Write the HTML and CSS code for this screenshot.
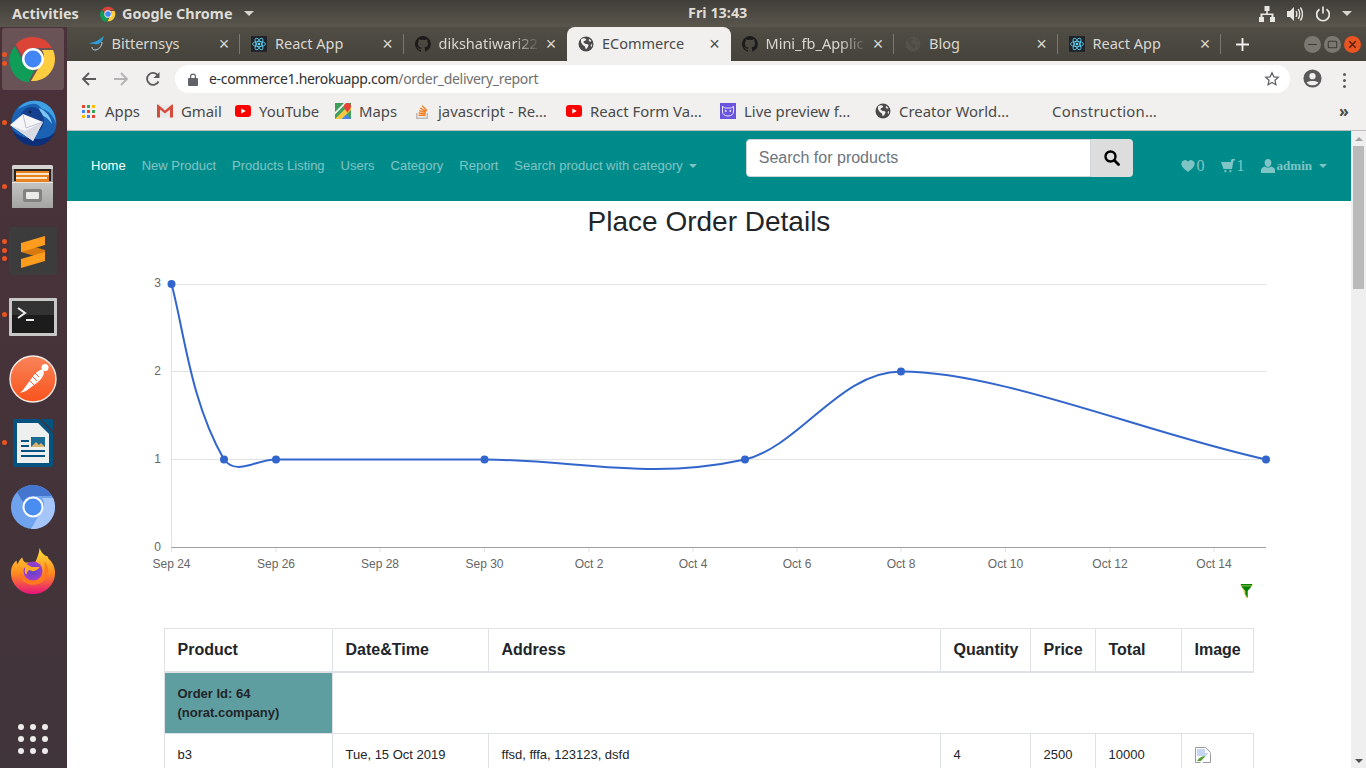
FILE: index.html
```html
<!DOCTYPE html>
<html lang="en">
<head>
<meta charset="utf-8">
<title>ECommerce</title>
<link rel="stylesheet" href="styles.css">
</head>
<body>
<svg class="defs" width="0" height="0" aria-hidden="true">
  <symbol id="i-chrome" viewBox="0 0 48 48">
    <path fill="#db4437" d="M24 2a22 22 0 0 1 19 11H24a11 11 0 0 0-10.500 7.500L6.500 9.500A22 22 0 0 1 24 2z"/>
    <path fill="#0f9d58" d="M5.800 11.500 15 27.500a11 11 0 0 0 10.500 7.400l-6.300 12.600A22 22 0 0 1 5.800 11.500z"/>
    <path fill="#ffcd40" d="M44 15a22 22 0 0 1-22 31l9.500-16.500A11 11 0 0 0 33 15z"/>
    <circle cx="24" cy="24" r="11" fill="#fff"/><circle cx="24" cy="24" r="8.500" fill="#4285f4"/>
  </symbol>
  <symbol id="i-chromium" viewBox="0 0 48 48">
    <circle cx="24" cy="24" r="22" fill="#6fa3ee"/>
    <path fill="#4476d0" d="M8 9a22 22 0 0 1 35 4H24a11 11 0 0 0-10 6z"/>
    <path fill="#a6c5f8" d="M44 15a22 22 0 0 1-22 31l9-16a11 11 0 0 0 2-15z"/>
    <circle cx="24" cy="24" r="9.500" fill="#4a8df0" stroke="#fff" stroke-width="2"/>
  </symbol>
  <symbol id="i-react" viewBox="0 0 16 16">
    <rect width="16" height="16" rx="1" fill="#20232a"/>
    <g fill="none" stroke="#61dafb" stroke-width=".8">
      <ellipse cx="8" cy="8" rx="6.500" ry="2.600"/>
      <ellipse cx="8" cy="8" rx="6.500" ry="2.600" transform="rotate(60 8 8)"/>
      <ellipse cx="8" cy="8" rx="6.500" ry="2.600" transform="rotate(120 8 8)"/>
    </g>
    <circle cx="8" cy="8" r="1.300" fill="#61dafb"/>
  </symbol>
  <symbol id="i-github" viewBox="0 0 16 16">
    <path fill="#1b1b1b" d="M8 0a8 8 0 0 0-2.500 15.600c.4.100.5-.2.500-.4v-1.400c-2.200.5-2.700-1-2.700-1-.4-.9-.9-1.200-.9-1.200-.7-.5.100-.5.100-.5.800.1 1.200.8 1.200.8.700 1.200 1.900.9 2.300.7.100-.5.300-.9.500-1.100-1.800-.2-3.600-.9-3.600-4 0-.9.300-1.600.8-2.100-.1-.2-.4-1 .1-2.100 0 0 .7-.2 2.200.8a7.600 7.600 0 0 1 4 0c1.500-1 2.200-.8 2.200-.8.400 1.100.2 1.900.1 2.100.5.600.8 1.300.8 2.100 0 3.100-1.900 3.700-3.700 3.900.3.300.6.700.6 1.500v2.200c0 .2.100.5.600.4A8 8 0 0 0 8 0z"/>
  </symbol>
  <symbol id="i-globe" viewBox="0 0 16 16">
    <circle cx="8" cy="8" r="7.500" fill="currentColor"/>
    <path class="land" d="M3 3.500c1-.8 2.500-1.300 3.500-1.200l1.800 1-1 1.500-1.500.4-.3 1.400 2.200 1.300 2.300.3.500 1.400-1.500 2.800-1.400.6-.6-2.600-2.200-1.500-1.800-2.700zM11 2.800l2.500 2.300-1.300.6-1.500-1zM13 8.500l1.200-.5-.6 3-1-1z"/>
  </symbol>
  <symbol id="i-youtube" viewBox="0 0 16 12">
    <rect width="16" height="12" rx="3.200" fill="#f00"/><path fill="#fff" d="M6.300 3.400 10.800 6l-4.500 2.600z"/>
  </symbol>
  <symbol id="i-heart" viewBox="0 0 14 13">
    <path fill="currentColor" d="M7 12.500C4 10 .3 7.500.3 4A3.600 3.600 0 0 1 7 2.300 3.600 3.600 0 0 1 13.700 4c0 3.500-3.700 6-6.700 8.500z"/>
  </symbol>
  <symbol id="i-cart" viewBox="0 0 14 14">
    <path fill="currentColor" d="M14 0v1.500h-1.500L11 10H2.500L0 3h9.800l.4-2L11 0zM3.500 11h1.800v2.300H3.500zM8.500 11h1.800v2.300H8.500z"/>
  </symbol>
  <symbol id="i-user" viewBox="0 0 14 14">
    <path fill="currentColor" d="M7 0c2.200 0 3.400 1.600 3.400 3.500S9.200 8 7 8 3.600 5.400 3.600 3.500 4.800 0 7 0zM4 7.500C5 9 9 9 10 7.500c2 .5 4 1.400 4 3.500v3H0v-3c0-2.100 2-3 4-3.500z"/>
  </symbol>
</svg>

<header class="topbar">
  <span class="activities">Activities</span>
  <span class="appmenu">
    <svg class="appicon"><use href="#i-chrome"/></svg>
    <span>Google Chrome</span><i class="tri"></i>
  </span>
  <span class="clock">Fri 13:43</span>
  <span class="tray">
    <svg class="tray-net" viewBox="0 0 16 16"><path fill="#e8e6e1" d="M5.500 0h5v5H8.800v2.500h5.700V11H16v5h-5v-5h1.500V9h-9v2H5v5H0v-5h1.500V7.500h5.700V5H5.500z"/></svg>
    <svg class="tray-vol" viewBox="0 0 16 16"><path fill="#e8e6e1" d="M0 5h3l4-4v14l-4-4H0z"/><path fill="none" stroke="#e8e6e1" stroke-width="1.400" d="M9 5c1 1.800 1 4.200 0 6M11.200 3.200c1.900 3 1.900 6.600 0 9.600M13.400 1.500c2.600 4 2.600 9 0 13"/></svg>
    <svg class="tray-pow" viewBox="0 0 16 16"><path fill="none" stroke="#e8e6e1" stroke-width="1.700" d="M4.500 3.200a6.300 6.300 0 1 0 7 0M8 .5v7"/></svg>
    <i class="tri"></i>
  </span>
</header>

<div class="desktop">
  <nav class="dock">
    <div class="dock-item active"><i class="dot d1"></i><i class="dot d2"></i><svg class="dock-icon"><use href="#i-chrome"/></svg></div>
    <div class="dock-item"><i class="dot"></i>
      <svg class="dock-icon" viewBox="0 0 48 48">
        <circle cx="25" cy="24" r="22.500" fill="#1b62b5"/>
        <path fill="#0b2f78" d="M3 30c3 10 12 17 23 17 10 0 17-6 20-14-5 5-10 7-18 7-10 0-20-3-25-10z"/>
        <path fill="#3fa0e2" d="M9 10C15 2 27-1 37 5c7 4 10 12 10 20-2-8-8-14-14-15-3-5-7-6-11-5-5 1-9 3-13 5z"/>
        <path fill="#7cc8f2" d="M30 9c7 3 12 9 13 16-3-5-7-8-11-9z"/>
        <path fill="#14408f" d="M10 22c1-8 6-14 13-14 5 0 8 3 10 7 3 5 2 12-2 17L10 22z"/>
        <circle cx="21" cy="13" r="1.300" fill="#0a1a3a"/>
        <path fill="#f6f6f8" d="M1 26 14 15l20 8-10 19z"/>
        <path fill="#d9dbe4" d="M1 26l15 6 18-9-10 19z"/>
        <path fill="none" stroke="#aeb3c6" stroke-width=".8" d="M14 15l3 14 17-6"/>
      </svg>
    </div>
    <div class="dock-item"><i class="dot"></i>
      <svg class="dock-icon" viewBox="0 0 48 48">
        <defs><linearGradient id="fc" x1="0" y1="0" x2="0" y2="1"><stop offset="0" stop-color="#c4c4c2"/><stop offset="1" stop-color="#a4a4a2"/></linearGradient></defs>
        <path fill="#9a9a98" d="M3 4a2 2 0 0 1 2-2h37a2 2 0 0 1 2 2v41H3z"/>
        <path fill="#d4d4d2" d="M5 2h37a2 2 0 0 1 2 2v2H3V4a2 2 0 0 1 2-2z"/>
        <rect x="5" y="6" width="37" height="12" fill="#26221f"/>
        <rect x="7" y="8" width="33" height="11" fill="#e8811f"/>
        <rect x="7" y="10" width="33" height="2" fill="#f8e6c8"/>
        <rect x="7" y="14" width="31" height="2" fill="#f8e6c8"/>
        <path fill="url(#fc)" d="M3 19h41v26H3z"/>
        <rect x="3" y="19" width="41" height="1" fill="#e4e4e2"/>
        <rect x="14" y="26" width="19" height="13" rx="2" fill="#828280"/>
        <rect x="17" y="29" width="13" height="7" rx="1" fill="#ebebe9"/>
      </svg>
    </div>
    <div class="dock-item"><i class="dot d3a"></i><i class="dot d3b"></i><i class="dot d3c"></i>
      <svg class="dock-icon" viewBox="0 0 48 48">
        <rect width="48" height="48" rx="3" fill="#3c3c3c"/>
        <path fill="#d97a0f" d="M12 16v9l24 7v-9z"/>
        <path fill="#fd9c1d" d="M12 16 36 9v9l-24 7z"/>
        <path fill="#fd9c1d" d="M12 32 36 25v9l-24 7z"/>
      </svg>
    </div>
    <div class="dock-item"><i class="dot"></i>
      <svg class="dock-icon dock-term" viewBox="0 0 48 40">
        <rect width="48" height="38" rx="1" fill="#c8c8c6"/>
        <rect x="3" y="3" width="42" height="32" fill="#1c1c1c"/>
        <rect x="3" y="3" width="42" height="14" fill="#333"/>
        <path fill="none" stroke="#ececec" stroke-width="2" d="M9 10l7 5-7 5"/>
        <path fill="#ececec" d="M17 21h8v2h-8z"/>
      </svg>
    </div>
    <div class="dock-item">
      <svg class="dock-icon" viewBox="0 0 48 48">
        <defs><linearGradient id="pm" x1="0" y1="0" x2="0" y2="1"><stop offset="0" stop-color="#f9845a"/><stop offset="1" stop-color="#f9531c"/></linearGradient></defs>
        <circle cx="24" cy="24" r="23" fill="url(#pm)" stroke="#f3ece7" stroke-width="1.400"/>
        <path fill="#fff" d="M11 38l3-3 11-15c2-3 6-5 9-6l1 4c-1 4-3 6-6 9L17 36z"/>
        <circle cx="36" cy="12.500" r="3.500" fill="#fff"/>
        <path fill="none" stroke="#f9643a" stroke-width="1" d="M20 25l5 5M23 21l5 5M26 18l4 4"/>
      </svg>
    </div>
    <div class="dock-item"><i class="dot"></i>
      <svg class="dock-icon dock-doc" viewBox="0 0 40 48">
        <path fill="#04527f" d="M2 0h24l14 14v32a2 2 0 0 1-2 2H2a2 2 0 0 1-2-2V2a2 2 0 0 1 2-2z"/>
        <path fill="#eef0f0" d="M4 4h21l11 11v29H4z"/>
        <path fill="#04527f" d="M28 0h10a2 2 0 0 1 2 2v10z"/>
        <path fill="#04527f" d="M8 21h8v2H8zM8 26h8v2H8zM8 31h24v2H8zM8 36h24v2H8z"/>
        <rect x="18" y="18" width="14" height="10" fill="#1d6c95"/>
        <path fill="#ddb36c" d="M18 28l5-5 3 3 2-2 4 4z"/>
      </svg>
    </div>
    <div class="dock-item"><svg class="dock-icon"><use href="#i-chromium"/></svg></div>
    <div class="dock-item">
      <svg class="dock-icon dock-fox" viewBox="0 0 48 48">
        <defs>
          <linearGradient id="ff" x1="0" y1="0" x2="0" y2="1"><stop offset="0" stop-color="#ffe13c"/><stop offset=".55" stop-color="#ff8a1e"/><stop offset="1" stop-color="#e6137c"/></linearGradient>
          <radialGradient id="fp"><stop offset="0" stop-color="#5b45c8"/><stop offset="1" stop-color="#a03bd0"/></radialGradient>
        </defs>
        <path fill="url(#ff)" d="M31 0c1 4 3 6 6 8 2 0 3 1 3 3 4 3 7 9 7 15 0 12-10 22-23 22S1 38 1 26c0-6 2-10 6-13 0 1 0 3 1 4 1-3 3-6 5-7 0 2 1 4 3 5 3 0 7 0 9 2 3-5 5-10 6-17z"/>
        <circle cx="24" cy="24" r="10" fill="url(#fp)"/>
        <path fill="#ff7a1e" d="M36 14c5 6 5 14 0 19-4 5-12 7-18 4-5-2-8-7-8-11 3 4 8 8 14 8s11-4 12-10c.5-3 .5-6 0-10z"/>
        <path fill="#ffa929" d="M6 18c5-3 11-2 15 1 4 2 8 0 10 1-2 3-8 6-10 3-2 0-3 2-4 5-2-2-2-5-1-7-3-2-6-3-10-3z"/>
      </svg>
    </div>
    <div class="apps-grid">
      <i></i><i></i><i></i><i></i><i></i><i></i><i></i><i></i><i></i>
    </div>
  </nav>

  <main class="window">
    <div class="tabstrip">
      <div class="tab"><svg class="fav" viewBox="0 0 16 16"><path fill="#2e9fd8" d="M0 7c5 0 10-2 16-7-1 4-3 7-6 8-2 .5-5 0-10-1z"/><path fill="none" stroke="#bcd8e6" d="M14 6c0 5-4 8-7 8-2 0-3-1-3-3"/></svg><span class="tab-title">Bitternsys</span><span class="tab-x">×</span></div>
      <div class="tab"><svg class="fav"><use href="#i-react"/></svg><span class="tab-title">React App</span><span class="tab-x">×</span></div>
      <div class="tab no-sep"><svg class="fav"><use href="#i-github"/></svg><span class="tab-title fade">dikshatiwari22</span><span class="tab-x">×</span></div>
      <div class="tab active no-sep"><svg class="fav globe"><use href="#i-globe"/></svg><span class="tab-title">ECommerce</span><span class="tab-x">×</span></div>
      <div class="tab"><svg class="fav"><use href="#i-github"/></svg><span class="tab-title fade">Mini_fb_Applic</span><span class="tab-x">×</span></div>
      <div class="tab"><svg class="fav globe-dim"><use href="#i-globe"/></svg><span class="tab-title">Blog</span><span class="tab-x">×</span></div>
      <div class="tab"><svg class="fav"><use href="#i-react"/></svg><span class="tab-title">React App</span><span class="tab-x">×</span></div>
      <svg class="newtab" viewBox="0 0 14 14"><path fill="#f1f0ef" d="M6 0h2v6h6v2H8v6H6V8H0V6h6z"/></svg>
      <div class="winbtns">
        <span class="wb"><svg viewBox="0 0 16 16"><path stroke="#3b3a36" stroke-width="1" d="M4 8h8"/></svg></span>
        <span class="wb"><svg viewBox="0 0 16 16"><rect x="4" y="5" width="8" height="6" rx="1" fill="none" stroke="#3b3a36"/></svg></span>
        <span class="wb close"><svg viewBox="0 0 16 16"><path stroke="#4a1d0c" stroke-width="1.200" d="M5 5l6 6M11 5l-6 6"/></svg></span>
      </div>
    </div>

    <div class="toolbar">
      <svg class="tb-ic" viewBox="0 0 16 16"><path fill="none" stroke="#5a5a5a" stroke-width="1.800" d="M15 8H2M8 2 2 8l6 6"/></svg>
      <svg class="tb-ic" viewBox="0 0 16 16"><path fill="none" stroke="#b3b3b3" stroke-width="1.800" d="M1 8h13M8 2l6 6-6 6"/></svg>
      <svg class="tb-ic" viewBox="0 0 16 16"><path fill="none" stroke="#5a5a5a" stroke-width="1.800" d="M13.500 10.500A6 6 0 1 1 13 4.500"/><path fill="#5a5a5a" d="M14.500 1v6h-6z"/></svg>
      <div class="omnibox">
        <svg class="lock" viewBox="0 0 10 13"><path fill="#5f6368" d="M2 5V3.500a3 3 0 0 1 6 0V5h1a1 1 0 0 1 1 1v6a1 1 0 0 1-1 1H1a1 1 0 0 1-1-1V6a1 1 0 0 1 1-1zm1.200 0h3.600V3.500a1.800 1.800 0 0 0-3.600 0z"/></svg>
        <span class="url"><b>e-commerce1.herokuapp.com</b>/order_delivery_report</span>
        <svg class="star" viewBox="0 0 16 16"><path fill="none" stroke="#5f6368" stroke-width="1.300" d="M8 1.800l1.900 4 4.400.5-3.300 3 .9 4.400L8 11.500l-3.900 2.200.9-4.400-3.300-3 4.400-.5z"/></svg>
      </div>
      <svg class="avatar" viewBox="0 0 20 20"><circle cx="10" cy="10" r="9.500" fill="#5a5a5a"/><circle cx="10" cy="7.500" r="3.300" fill="#f1f0ef"/><path fill="#f1f0ef" d="M3.800 14.500c1.500-2.500 10.900-2.500 12.400 0-3 3.600-9.400 3.600-12.400 0z"/></svg>
      <span class="kebab"><i></i><i></i><i></i></span>
    </div>

    <div class="bookmarks">
      <span class="bm"><svg class="bm-ic apps" viewBox="0 0 13 13"><rect width="3" height="3" fill="#ea4335"/><rect x="5" width="3" height="3" fill="#34a853"/><rect x="10" width="3" height="3" fill="#fbbc05"/><rect y="5" width="3" height="3" fill="#4285f4"/><rect x="5" y="5" width="3" height="3" fill="#ea4335"/><rect x="10" y="5" width="3" height="3" fill="#34a853"/><rect y="10" width="3" height="3" fill="#fbbc05"/><rect x="5" y="10" width="3" height="3" fill="#4285f4"/><rect x="10" y="10" width="3" height="3" fill="#ea4335"/></svg>Apps</span>
      <span class="bm"><svg class="bm-ic" viewBox="0 0 16 13"><path fill="#e8e8e8" d="M1 1h14v12H1z"/><path fill="#d54c3f" d="M1 0l7 6 7-6h1v13h-3V5L8 9 3 5v8H0V0z"/></svg>Gmail</span>
      <span class="bm"><svg class="bm-ic" viewBox="0 0 16 12"><use href="#i-youtube"/></svg>YouTube</span>
      <span class="bm"><svg class="bm-ic" viewBox="0 0 16 16"><rect width="16" height="16" fill="#3f9f5a"/><path fill="#f6c945" d="M0 16 14 2l2 2v3L7 16z"/><path fill="#4285f4" d="M7 16l4.500-4.500L16 16z"/><path fill="#f1f1f1" d="M0 9l9-9h2.500L0 11.500z"/><path fill="#ea4335" d="M12.500 0A3.500 3.500 0 0 1 16 3.500C16 6 13 8 12.500 10 12 8 9 6 9 3.500A3.500 3.500 0 0 1 12.500 0z"/></svg>Maps</span>
      <span class="bm"><svg class="bm-ic" viewBox="0 0 16 16"><path fill="#bcbbbb" d="M2 10h1.500v4.500h9V10H14v6H2z"/><path fill="#f48024" d="M4.500 11.500h7V13h-7zM4.700 9.300l7 .7-.1 1.400-7-.7zM5.300 6.900l6.800 1.800-.4 1.400-6.800-1.800zM6.600 4.500l6 3.500-.7 1.200-6-3.500zM8.700 2.300l4.800 5-1 1-4.800-5z"/></svg>javascript - Re…</span>
      <span class="bm"><svg class="bm-ic" viewBox="0 0 16 12"><use href="#i-youtube"/></svg>React Form Va…</span>
      <span class="bm"><svg class="bm-ic" viewBox="0 0 16 16"><rect width="16" height="16" fill="#6a55dc"/><path fill="none" stroke="#e8e4ff" d="M2.500 3l2 2h7l2-2v6c0 2-2 4-5.500 4S2.500 11 2.500 9z"/><circle cx="5.700" cy="8" r="1" fill="#e8e4ff"/><circle cx="10.300" cy="8" r="1" fill="#e8e4ff"/></svg>Live preview f…</span>
      <span class="bm"><svg class="bm-ic globe"><use href="#i-globe"/></svg>Creator World…</span>
      <span class="bm bm-last"><span class="bm-ic"></span>Construction…</span>
      <span class="bm-more">»</span>
    </div>

    <div class="viewport">
      <div class="page">
        <div class="navbar">
          <ul class="nav-links">
            <li class="current">Home</li>
            <li>New Product</li>
            <li>Products Listing</li>
            <li>Users</li>
            <li>Category</li>
            <li>Report</li>
            <li class="has-caret">Search product with category</li>
          </ul>
          <form class="search">
            <input class="search-input" type="text" placeholder="Search for products">
            <button class="search-btn" type="button" aria-label="Search"><svg viewBox="0 0 16 16"><circle cx="6.500" cy="6.500" r="5" fill="none" stroke="#000" stroke-width="2.400"/><path stroke="#000" stroke-width="2.800" stroke-linecap="round" d="M10.500 10.500l4 4"/></svg></button>
          </form>
          <ul class="nav-right">
            <li><svg class="nr-ic"><use href="#i-heart"/></svg>0</li>
            <li><svg class="nr-ic"><use href="#i-cart"/></svg>1</li>
            <li class="has-caret admin"><svg class="nr-ic"><use href="#i-user"/></svg>admin</li>
          </ul>
        </div>

        <h3 class="title">Place Order Details</h3>

        <svg class="chart" viewBox="67 243 1284 341">
          <g class="grid">
            <path d="M171.500 284.500H1266M171.500 371.500H1266M171.500 459.500H1266M171.500 284V552M276 547v5M380 547v5M484.500 547v5M589 547v5M693 547v5M797 547v5M901 547v5M1005.500 547v5M1110 547v5M1214 547v5"/>
          </g>
          <path class="baseline" d="M171.500 547.500H1266"/>
          <g class="ylab">
            <text x="161" y="287">3</text><text x="161" y="375">2</text><text x="161" y="463">1</text><text x="161" y="550.500">0</text>
          </g>
          <g class="xlab">
            <text x="171.500" y="568">Sep 24</text><text x="276" y="568">Sep 26</text><text x="380" y="568">Sep 28</text><text x="484.500" y="568">Sep 30</text><text x="589" y="568">Oct 2</text><text x="693" y="568">Oct 4</text><text x="797" y="568">Oct 6</text><text x="901" y="568">Oct 8</text><text x="1005.500" y="568">Oct 10</text><text x="1110" y="568">Oct 12</text><text x="1214" y="568">Oct 14</text>
          </g>
          <path class="line" d="M171.500 284C184 330 190 400 224 459.500C232 470 243 467 252 464.500C260 462 268 459.500 276 459.500C345 459.500 415 459.500 484.500 459.500C545 459.500 595 469 655 469C690 469 715 466 745 459.500C800 446 840 371.500 901 371.500C1000 371.500 1145 433 1266 459.500"/>
          <g class="pts">
            <circle cx="171.500" cy="284" r="4"/><circle cx="224" cy="459.500" r="4"/><circle cx="276" cy="459.500" r="4"/><circle cx="484.500" cy="459.500" r="4"/><circle cx="745" cy="459.500" r="4"/><circle cx="901" cy="371.500" r="4"/><circle cx="1266" cy="459.500" r="4"/>
          </g>
        </svg>

        <div class="filter-row">
          <svg class="filter" viewBox="0 0 13 15"><path fill="#c8b400" d="M0 0h13v1L8 7v8H6z" opacity=".55"/><path fill="#008000" d="M.5 0h12v1.500H.5zM1 2.500h11L7.700 7.500V15L5.300 11V7.500z"/></svg>
        </div>

        <table class="orders">
          <colgroup><col class="c1"><col class="c2"><col class="c3"><col class="c4"><col class="c5"><col class="c6"><col class="c7"></colgroup>
          <thead>
            <tr><th>Product</th><th>Date&amp;Time</th><th>Address</th><th>Quantity</th><th>Price</th><th>Total</th><th>Image</th></tr>
          </thead>
          <tbody>
            <tr class="order-row"><td class="order-id">Order Id: 64<br>(norat.company)</td></tr>
            <tr class="item-row">
              <td>b3</td><td>Tue, 15 Oct 2019</td><td>ffsd, fffa, 123123, dsfd</td><td>4</td><td>2500</td><td>10000</td>
              <td><svg class="broken" viewBox="0 0 16 16"><path fill="#fff" stroke="#9a9a9a" d="M.5.5h10l5 5v10H.5z"/><path fill="#c5d6f2" d="M2 2h8v4h4v3H2z"/><path fill="#5aa13a" d="M2 14c2-4 6-5 9-5l-5 5z"/><path stroke="#fff" stroke-width="2" d="M15 6 6 16"/></svg></td>
            </tr>
          </tbody>
        </table>
      </div>
      <div class="scrollbar"><i class="sb-up"></i><div class="sb-thumb"></div><i class="sb-down"></i></div>
    </div>
  </main>
</div>
</body>
</html>
```
FILE: styles.css
```css
* { box-sizing: border-box; }
html, body { margin: 0; height: 768px; overflow: hidden; }
body { display: flex; flex-direction: column; font-family: "Liberation Sans", Arial, sans-serif; background: #fff; }
.defs { position: absolute; }

/* GNOME top bar */
.topbar { height: 27px; flex: none; display: flex; align-items: center; position: relative; padding-left: 12px; font: 700 14.400px "Noto Sans", sans-serif; color: #dfdcd6; background: linear-gradient(#403e39, #5a564e); }
.activities { width: 88px; }
.appmenu { display: flex; align-items: center; gap: 6px; }
.appicon { width: 16px; height: 16px; }
.tri { display: inline-block; width: 0; height: 0; border: 5px solid transparent; border-top: 5px solid #d8d5cf; border-bottom: 0; margin-left: 6px; }
.clock { position: absolute; left: 688px; top: 3px; }
.tray { margin-left: auto; padding-right: 14px; display: flex; align-items: center; gap: 12px; }
.tray svg { width: 16px; height: 16px; }
.tray .tri { margin-left: -1px; }

.desktop { flex: 1; display: flex; min-height: 0; }

/* Dock */
.dock { width: 67px; flex: none; display: flex; flex-direction: column; background: linear-gradient(#4b3139, #40353a); position: relative; }
.dock-item { height: 64px; flex: none; position: relative; display: flex; align-items: center; justify-content: center; padding-right: 1px; }
.dock-item.active::before { content: ""; position: absolute; left: 2px; right: 3px; top: 1px; bottom: 1px; border-radius: 3px; background: #6a5357; }
.dock-icon { position: relative; width: 48px; height: 48px; }
.dock-term { height: 40px; margin-top: 6px; }
.dock-doc { width: 40px; }
.dock-fox { width: 46px; height: 46px; }
.dot { position: absolute; left: 2px; top: 29px; width: 5px; height: 5px; border-radius: 50%; background: #e95420; z-index: 1; }
.dot.d1 { top: 25px; }
.dot.d2 { top: 34px; }
.dot.d3a { top: 20px; }
.dot.d3b { top: 29px; }
.dot.d3c { top: 37px; }
.apps-grid { margin-top: auto; margin-bottom: 14px; margin-left: 18px; width: 30px; display: grid; grid-template-columns: repeat(3, 6px); gap: 6px; }
.apps-grid i { width: 6px; height: 6px; border-radius: 50%; background: #ecebea; }

/* Browser window */
.window { flex: 1; min-width: 0; display: flex; flex-direction: column; background: #f1f0ef; }
.tabstrip { height: 34px; flex: none; display: flex; align-items: center; padding-left: 9.500px; background: linear-gradient(#504d45, #46433c); font: 14.500px/20px "Noto Sans", sans-serif; color: #dad7d1; }
.tab { width: 163.500px; height: 34px; flex: none; display: flex; align-items: center; padding-left: 11px; position: relative; }
.tab::after { content: ""; position: absolute; right: 0; top: 7px; height: 20px; width: 1px; background: #7b7870; }
.tab.no-sep::after { display: none; }
.tab.active { background: #f1f0ef; color: #4a4a4a; border-radius: 8px 8px 0 0; }
.fav { width: 16px; height: 16px; flex: none; margin-right: 8px; }
.land { fill: var(--land, #f1f0ef); }
.globe { color: #4a4a4a; }
.globe-dim { color: #55524a; --land: #4d4a42; }
.tab-title { flex: 1; min-width: 0; white-space: nowrap; overflow: hidden; margin-top: -2px; }
.fade { -webkit-mask-image: linear-gradient(90deg, #000 72%, transparent 100%); mask-image: linear-gradient(90deg, #000 72%, transparent 100%); }
.tab-x { width: 20px; margin-right: 6px; flex: none; text-align: center; font: 18px/20px "Liberation Sans", sans-serif; }
.newtab { width: 13px; height: 13px; flex: none; margin-left: 15px; }
.winbtns { margin-left: auto; padding-right: 5px; display: flex; gap: 3px; }
.wb { width: 17px; height: 17px; border-radius: 50%; background: #7a7870; display: block; }
.wb svg { display: block; }
.wb.close { background: #e95420; }

.toolbar { height: 33px; flex: none; display: flex; align-items: flex-start; padding-left: 14px; background: #f1f0ef; }
.tb-ic { width: 16px; height: 16px; flex: none; margin: 10px 16px 0 0; }
.omnibox { width: 1115px; height: 28px; margin-left: -2px; margin-top: 4px; flex: none; border-radius: 14px; background: #fff; display: flex; align-items: center; padding-left: 13px; }
.lock { width: 10px; height: 13px; flex: none; margin-right: 11px; }
.url { font: 14px/20px "Noto Sans", sans-serif; letter-spacing: -.32px; color: #6f6f6f; flex: 1; white-space: nowrap; }
.url b { font-weight: 400; color: #303030; }
.star { width: 16px; height: 16px; margin-right: 10px; }
.avatar { width: 19px; height: 19px; flex: none; margin: 8px 0 0 13px; }
.kebab { display: flex; flex-direction: column; gap: 3px; margin: 12px 0 0 21px; }
.kebab i { width: 3px; height: 3px; border-radius: 50%; background: #5a5a5a; }

.bookmarks { height: 37px; flex: none; display: grid; grid-template-columns: 75px 78px 100px 79px 152px 154px 155px 153px 1fr 30px; align-items: center; padding-left: 15px; padding-bottom: 2px; font: 14.900px/20px "Noto Sans", sans-serif; color: #4a4a4a; border-bottom: 1px solid #bdbdbb; background: #f1f0ef; }
.bm { display: flex; align-items: center; white-space: nowrap; }
.bm-last { letter-spacing: .25px; }
.bm-ic { width: 16px; height: 16px; flex: none; margin-right: 8px; display: block; }
.bm-ic.apps { width: 13px; height: 13px; margin-right: 10px; }
.bm-more { font-size: 16px; font-weight: 700; padding-left: 3px; }

/* Page */
.viewport { height: 637px; flex: none; display: flex; overflow: hidden; background: #fff; }
.page { flex: 1; min-width: 0; }
.navbar { height: 70px; display: flex; align-items: flex-start; background: #008b8b; padding: 8px 16px 0; }
.nav-links, .nav-right { list-style: none; margin: 17px 0 0; padding: 0; display: flex; font-size: 13px; line-height: 20px; color: rgba(255,255,255,.5); }
.nav-links li, .nav-right li { padding: 0 8px; white-space: nowrap; display: flex; align-items: center; }
.nav-links li.current { color: #fff; }
.has-caret::after { content: ""; margin-left: 6px; width: 0; height: 0; border: 4px solid transparent; border-top-color: currentColor; border-bottom: 0; }
.search { display: flex; margin-left: 41px; width: 387px; height: 38px; }
.search-input { flex: 1; min-width: 0; height: 38px; padding: 6px 12px; font: 16px "Liberation Sans", sans-serif; border: 1px solid #ced4da; border-radius: 4px 0 0 4px; color: #495057; background: #fff; }
.search-input::placeholder { color: #6c757d; opacity: 1; }
.search-btn { width: 42px; height: 38px; padding: 0; border: 0; border-radius: 0 4px 4px 0; background: #ddd; display: flex; align-items: center; justify-content: center; }
.search-btn svg { width: 16px; height: 16px; }
.nav-right { margin-left: auto; font-family: "Liberation Serif", serif; color: rgba(255,255,255,.5); font-size: 16px; }
.nr-ic { width: 14px; height: 14px; flex: none; margin-right: 2px; color: rgba(255,255,255,.5); }
.admin { font-weight: 700; font-size: 13px; }
.admin::after { margin-left: 7px; }
.title { margin: 0; height: 42px; font-size: 28px; font-weight: 400; line-height: 42px; text-align: center; color: #212529; }

.chart { display: block; width: 1284px; height: 341px; font: 12px "Liberation Sans", sans-serif; }
.grid path { fill: none; stroke: #e2e2e2; stroke-width: 1; }
.baseline { fill: none; stroke: #9e9e9e; stroke-width: 1; }
.ylab text { text-anchor: end; fill: #666; }
.xlab text { text-anchor: middle; fill: #666; }
.line { fill: none; stroke: #3366cc; stroke-width: 2; }
.pts circle { fill: #3366cc; }

.filter-row { height: 14px; margin-bottom: 30px; display: flex; justify-content: flex-end; padding-right: 98px; }
.filter { width: 13px; height: 14px; display: block; }

.orders { width: 1089px; margin: 0 0 0 97px; table-layout: fixed; border-collapse: collapse; color: #212529; font-size: 13px; }
.c1 { width: 168px; } .c2 { width: 156px; } .c3 { width: 452px; } .c4 { width: 90px; } .c5 { width: 65px; } .c6 { width: 86px; } .c7 { width: 72px; }
.orders th, .orders td { border: 1px solid #dee2e6; padding: 10px 12px 10px 12.500px; text-align: left; vertical-align: top; }
.orders th { font-size: 16px; font-weight: 700; line-height: 24px; padding-top: 9px; padding-bottom: 9px; border-bottom-width: 2px; }
.orders td { line-height: 19.500px; }
.orders .order-id { background: #5f9ea0; font-weight: 700; line-height: 19px; padding-top: 11px; padding-bottom: 11px; }
.item-row td { padding-top: 11px; }
.broken { display: block; width: 16px; height: 16px; margin-top: 2px; }

.scrollbar { width: 15px; flex: none; background: #efefef; position: relative; display: flex; flex-direction: column; align-items: center; }
.sb-up { margin-top: 6px; width: 0; height: 0; border: 4px solid transparent; border-bottom: 4px solid #a3a3a3; border-top: 0; }
.sb-thumb { margin-top: 5px; width: 11px; height: 143px; background: #bababa; }
.sb-down { margin-top: auto; margin-bottom: 5px; width: 0; height: 0; border: 4px solid transparent; border-top: 4px solid #505050; border-bottom: 0; }
```
